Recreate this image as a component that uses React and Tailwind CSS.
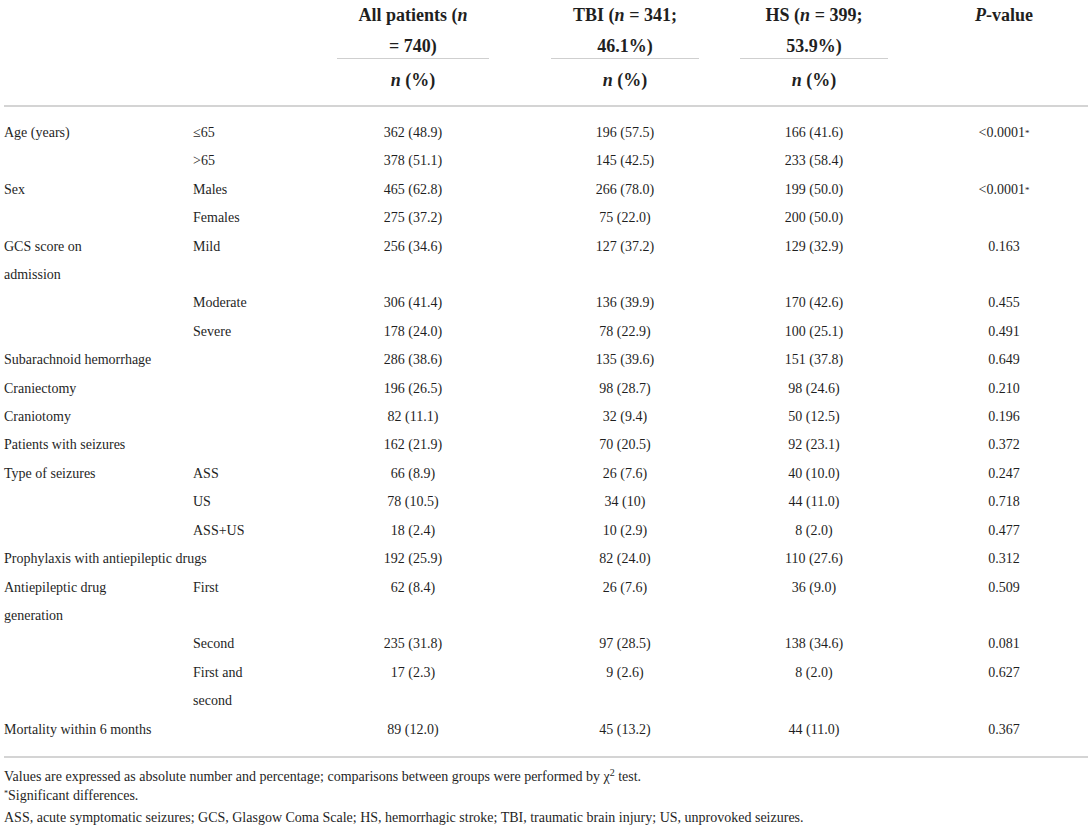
import React from "react";

const rows = [
  { a: "Age (years)", b: "≤65", c: "362 (48.9)", d: "196 (57.5)", e: "166 (41.6)", p: "<0.0001", star: true },
  { b: ">65", c: "378 (51.1)", d: "145 (42.5)", e: "233 (58.4)" },
  { a: "Sex", b: "Males", c: "465 (62.8)", d: "266 (78.0)", e: "199 (50.0)", p: "<0.0001", star: true },
  { b: "Females", c: "275 (37.2)", d: "75 (22.0)", e: "200 (50.0)" },
  { a: "GCS score on admission", b: "Mild", c: "256 (34.6)", d: "127 (37.2)", e: "129 (32.9)", p: "0.163" },
  { b: "Moderate", c: "306 (41.4)", d: "136 (39.9)", e: "170 (42.6)", p: "0.455" },
  { b: "Severe", c: "178 (24.0)", d: "78 (22.9)", e: "100 (25.1)", p: "0.491" },
  { a: "Subarachnoid hemorrhage", c: "286 (38.6)", d: "135 (39.6)", e: "151 (37.8)", p: "0.649" },
  { a: "Craniectomy", c: "196 (26.5)", d: "98 (28.7)", e: "98 (24.6)", p: "0.210" },
  { a: "Craniotomy", c: "82 (11.1)", d: "32 (9.4)", e: "50 (12.5)", p: "0.196" },
  { a: "Patients with seizures", c: "162 (21.9)", d: "70 (20.5)", e: "92 (23.1)", p: "0.372" },
  { a: "Type of seizures", b: "ASS", c: "66 (8.9)", d: "26 (7.6)", e: "40 (10.0)", p: "0.247" },
  { b: "US", c: "78 (10.5)", d: "34 (10)", e: "44 (11.0)", p: "0.718" },
  { b: "ASS+US", c: "18 (2.4)", d: "10 (2.9)", e: "8 (2.0)", p: "0.477" },
  { a: "Prophylaxis with antiepileptic drugs", c: "192 (25.9)", d: "82 (24.0)", e: "110 (27.6)", p: "0.312" },
  { a: "Antiepileptic drug generation", b: "First", c: "62 (8.4)", d: "26 (7.6)", e: "36 (9.0)", p: "0.509" },
  { b: "Second", c: "235 (31.8)", d: "97 (28.5)", e: "138 (34.6)", p: "0.081" },
  { b: "First and second", c: "17 (2.3)", d: "9 (2.6)", e: "8 (2.0)", p: "0.627" },
  { a: "Mortality within 6 months", c: "89 (12.0)", d: "45 (13.2)", e: "44 (11.0)", p: "0.367" },
];

const Row = ({ r }) => {
  const hasB = r.b !== undefined;
  return (
    <div className="flex items-start leading-[28.4px]">
      {hasB ? (
        <>
          <div className="w-[189px] pr-[52px]">{r.a}</div>
          <div className="w-[144px] pr-[64px]">{r.b}</div>
        </>
      ) : (
        <div className="w-[333px]">{r.a}</div>
      )}
      <div className="w-[152px] text-center">{r.c}</div>
      <div className="ml-[62px] w-[148px] text-center">{r.d}</div>
      <div className="ml-[41px] w-[148px] text-center">{r.e}</div>
      <div className="ml-[42px] w-[148px] text-center">
        {r.p}
        {r.star && <sup className="text-[9px] relative -top-[1px]">*</sup>}
      </div>
    </div>
  );
};

const Head = ({ children, className }) => (
  <div className={"text-center " + className}>
    <div className="leading-[31px] h-[59px] border-b border-[#cfcfcf]">{children}</div>
    <div className="pt-[9px] leading-[24px]">
      <i>n</i> (%)
    </div>
  </div>
);

export default function App() {
  return (
    <div className="bg-white w-[1092px] h-[826px] text-[#1f1f1f] px-1" style={{ fontFamily: '"Liberation Serif", "Times New Roman", serif' }}>
      <div className="flex items-start text-[18px] font-bold h-[105px]">
        <div className="w-[333px]"></div>
        <Head className="w-[152px]">
          All patients (<i>n</i>
          <br />= 740)
        </Head>
        <Head className="ml-[62px] w-[148px]">
          TBI (<i>n</i> = 341;
          <br />
          46.1%)
        </Head>
        <Head className="ml-[41px] w-[148px]">
          HS (<i>n</i> = 399;
          <br />
          53.9%)
        </Head>
        <div className="ml-[42px] w-[148px] text-center leading-[31px]">
          <i>P</i>-value
        </div>
      </div>
      <div className="border-t-2 border-b-2 border-[#d4d4d4] py-3 text-[14px]">
        {rows.map((r, i) => (
          <Row key={i} r={r} />
        ))}
      </div>
      <div className="text-[14px] pt-[9px] leading-[19px]">
        <p>
          Values are expressed as absolute number and percentage; comparisons between groups were performed by χ
          <sup className="text-[10px]">2</sup> test.
        </p>
        <p>
          <sup className="text-[8px]">*</sup>Significant differences.
        </p>
        <p className="mt-[3px]">
          ASS, acute symptomatic seizures; GCS, Glasgow Coma Scale; HS, hemorrhagic stroke; TBI, traumatic brain injury; US, unprovoked seizures.
        </p>
      </div>
    </div>
  );
}
